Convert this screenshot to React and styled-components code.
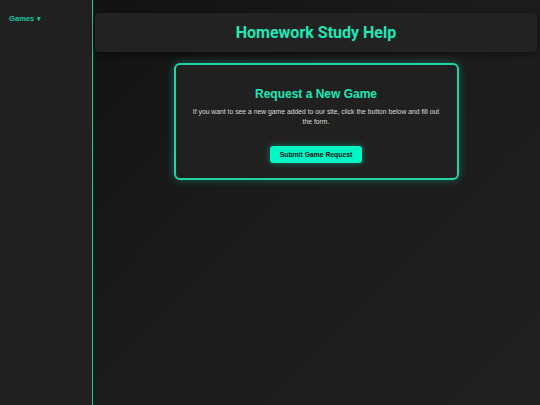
import React from "react";
import styled, { createGlobalStyle } from "styled-components";

const Global = createGlobalStyle`
  html, body { margin: 0; padding: 0; background: #1a1a1a; }
  body { font-family: "Liberation Sans", Arial, sans-serif; overflow: hidden; }
  * { box-sizing: border-box; }
`;

const Layout = styled.div`
  display: flex;
  width: 100vw;
  height: 100vh;
`;

const Sidebar = styled.nav`
  width: 93px;
  flex-shrink: 0;
  background: #202020;
  border-right: 1px solid #1fc9a0;
  padding: 14px 9px;
`;

const MenuToggle = styled.div`
  color: #1ec9a0;
  font-weight: bold;
  font-size: 7.6px;
  display: flex;
  align-items: center;
  gap: 3px;
`;

const Caret = styled.span`
  font-size: 7px;
`;

const Main = styled.main`
  flex: 1;
  display: flex;
  flex-direction: column;
  align-items: center;
  background: linear-gradient(135deg, #121212 0%, #1b1b1b 45%, #202020 100%);
  padding: 13px 3px 0 2px;
`;

const Header = styled.header`
  align-self: stretch;
  height: 39px;
  background: #222222;
  border-radius: 4px;
  box-shadow: 0 2px 6px rgba(0, 0, 0, 0.45);
  display: flex;
  align-items: center;
  justify-content: center;
`;

const Title = styled.h1`
  margin: 0;
  font-family: Roboto, "Liberation Sans", sans-serif;
  font-weight: 700;
  font-size: 16px;
  color: #1de9b6;
`;

const Card = styled.section`
  margin-top: 11px;
  width: 285px;
  height: 117px;
  border: 2px solid #22d3a6;
  border-radius: 6px;
  background: #202020;
  box-shadow: 0 0 8px rgba(29, 233, 182, 0.35);
  display: flex;
  flex-direction: column;
  align-items: center;
  padding: 22px 16px 0;
  text-align: center;
`;

const CardTitle = styled.h2`
  margin: 0;
  font-size: 12px;
  font-weight: bold;
  color: #1de9b6;
  line-height: 14px;
`;

const CardText = styled.p`
  margin: 6px 0 0;
  font-size: 6.8px;
  line-height: 10px;
  color: #dcdcdc;
`;

const Button = styled.button`
  margin-top: 19px;
  height: 17px;
  padding: 0 10px;
  border: none;
  border-radius: 3px;
  background: #00f5c4;
  color: #111;
  font-family: "Liberation Sans", Arial, sans-serif;
  font-weight: bold;
  font-size: 6.8px;
  box-shadow: 0 0 6px rgba(0, 245, 196, 0.45);
  cursor: pointer;
`;

export default function App() {
  return (
    <>
      <Global />
      <Layout>
        <Sidebar>
          <MenuToggle>
            Games<Caret>▾</Caret>
          </MenuToggle>
        </Sidebar>
        <Main>
          <Header>
            <Title>Homework Study Help</Title>
          </Header>
          <Card>
            <CardTitle>Request a New Game</CardTitle>
            <CardText>
              If you want to see a new game added to our site, click the button below and fill out the form.
            </CardText>
            <Button>Submit Game Request</Button>
          </Card>
        </Main>
      </Layout>
    </>
  );
}
